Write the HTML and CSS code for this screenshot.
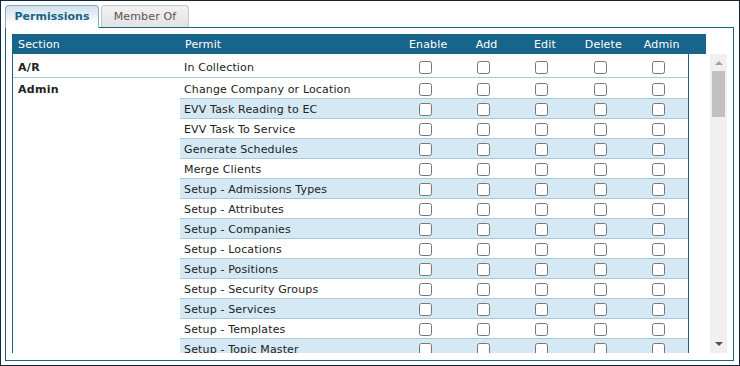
FILE: index.html
```html
<!DOCTYPE html>
<html lang="en">
<head>
    <meta charset="UTF-8">
    <title>Security Group Permissions</title>
    <link rel="stylesheet" href="styles.css">
</head>
<body>
    <div class="window">
        <div class="tabs">
            <div class="tab active">Permissions</div>
            <div class="tab">Member Of</div>
        </div>

        <div class="panel">
            <div class="grid-head">
                <div class="col-section">Section</div>
                <div class="col-permit">Permit</div>
                <div class="col-flag">Enable</div>
                <div class="col-flag">Add</div>
                <div class="col-flag">Edit</div>
                <div class="col-flag">Delete</div>
                <div class="col-flag">Admin</div>
            </div>

            <div class="grid-wrap">
                <div class="grid-body">
                    <div class="section">
                        <div class="section-name">A/R</div>
                        <div class="permits">
                            <div class="permit-row">
                                <div class="permit-name">In Collection</div>
                                <div class="flag"><input type="checkbox"></div>
                                <div class="flag"><input type="checkbox"></div>
                                <div class="flag"><input type="checkbox"></div>
                                <div class="flag"><input type="checkbox"></div>
                                <div class="flag"><input type="checkbox"></div>
                            </div>
                        </div>
                    </div>

                    <div class="section">
                        <div class="section-name">Admin</div>
                        <div class="permits">
                            <div class="permit-row">
                                <div class="permit-name">Change Company or Location</div>
                                <div class="flag"><input type="checkbox"></div>
                                <div class="flag"><input type="checkbox"></div>
                                <div class="flag"><input type="checkbox"></div>
                                <div class="flag"><input type="checkbox"></div>
                                <div class="flag"><input type="checkbox"></div>
                            </div>
                            <div class="permit-row">
                                <div class="permit-name">EVV Task Reading to EC</div>
                                <div class="flag"><input type="checkbox"></div>
                                <div class="flag"><input type="checkbox"></div>
                                <div class="flag"><input type="checkbox"></div>
                                <div class="flag"><input type="checkbox"></div>
                                <div class="flag"><input type="checkbox"></div>
                            </div>
                            <div class="permit-row">
                                <div class="permit-name">EVV Task To Service</div>
                                <div class="flag"><input type="checkbox"></div>
                                <div class="flag"><input type="checkbox"></div>
                                <div class="flag"><input type="checkbox"></div>
                                <div class="flag"><input type="checkbox"></div>
                                <div class="flag"><input type="checkbox"></div>
                            </div>
                            <div class="permit-row">
                                <div class="permit-name">Generate Schedules</div>
                                <div class="flag"><input type="checkbox"></div>
                                <div class="flag"><input type="checkbox"></div>
                                <div class="flag"><input type="checkbox"></div>
                                <div class="flag"><input type="checkbox"></div>
                                <div class="flag"><input type="checkbox"></div>
                            </div>
                            <div class="permit-row">
                                <div class="permit-name">Merge Clients</div>
                                <div class="flag"><input type="checkbox"></div>
                                <div class="flag"><input type="checkbox"></div>
                                <div class="flag"><input type="checkbox"></div>
                                <div class="flag"><input type="checkbox"></div>
                                <div class="flag"><input type="checkbox"></div>
                            </div>
                            <div class="permit-row">
                                <div class="permit-name">Setup - Admissions Types</div>
                                <div class="flag"><input type="checkbox"></div>
                                <div class="flag"><input type="checkbox"></div>
                                <div class="flag"><input type="checkbox"></div>
                                <div class="flag"><input type="checkbox"></div>
                                <div class="flag"><input type="checkbox"></div>
                            </div>
                            <div class="permit-row">
                                <div class="permit-name">Setup - Attributes</div>
                                <div class="flag"><input type="checkbox"></div>
                                <div class="flag"><input type="checkbox"></div>
                                <div class="flag"><input type="checkbox"></div>
                                <div class="flag"><input type="checkbox"></div>
                                <div class="flag"><input type="checkbox"></div>
                            </div>
                            <div class="permit-row">
                                <div class="permit-name">Setup - Companies</div>
                                <div class="flag"><input type="checkbox"></div>
                                <div class="flag"><input type="checkbox"></div>
                                <div class="flag"><input type="checkbox"></div>
                                <div class="flag"><input type="checkbox"></div>
                                <div class="flag"><input type="checkbox"></div>
                            </div>
                            <div class="permit-row">
                                <div class="permit-name">Setup - Locations</div>
                                <div class="flag"><input type="checkbox"></div>
                                <div class="flag"><input type="checkbox"></div>
                                <div class="flag"><input type="checkbox"></div>
                                <div class="flag"><input type="checkbox"></div>
                                <div class="flag"><input type="checkbox"></div>
                            </div>
                            <div class="permit-row">
                                <div class="permit-name">Setup - Positions</div>
                                <div class="flag"><input type="checkbox"></div>
                                <div class="flag"><input type="checkbox"></div>
                                <div class="flag"><input type="checkbox"></div>
                                <div class="flag"><input type="checkbox"></div>
                                <div class="flag"><input type="checkbox"></div>
                            </div>
                            <div class="permit-row">
                                <div class="permit-name">Setup - Security Groups</div>
                                <div class="flag"><input type="checkbox"></div>
                                <div class="flag"><input type="checkbox"></div>
                                <div class="flag"><input type="checkbox"></div>
                                <div class="flag"><input type="checkbox"></div>
                                <div class="flag"><input type="checkbox"></div>
                            </div>
                            <div class="permit-row">
                                <div class="permit-name">Setup - Services</div>
                                <div class="flag"><input type="checkbox"></div>
                                <div class="flag"><input type="checkbox"></div>
                                <div class="flag"><input type="checkbox"></div>
                                <div class="flag"><input type="checkbox"></div>
                                <div class="flag"><input type="checkbox"></div>
                            </div>
                            <div class="permit-row">
                                <div class="permit-name">Setup - Templates</div>
                                <div class="flag"><input type="checkbox"></div>
                                <div class="flag"><input type="checkbox"></div>
                                <div class="flag"><input type="checkbox"></div>
                                <div class="flag"><input type="checkbox"></div>
                                <div class="flag"><input type="checkbox"></div>
                            </div>
                            <div class="permit-row">
                                <div class="permit-name">Setup - Topic Master</div>
                                <div class="flag"><input type="checkbox"></div>
                                <div class="flag"><input type="checkbox"></div>
                                <div class="flag"><input type="checkbox"></div>
                                <div class="flag"><input type="checkbox"></div>
                                <div class="flag"><input type="checkbox"></div>
                            </div>
                        </div>
                    </div>
                </div>

                <div class="scrollbar">
                    <div class="scroll-up"></div>
                    <div class="scroll-thumb"></div>
                    <div class="scroll-space"></div>
                    <div class="scroll-down"></div>
                </div>
            </div>
        </div>
    </div>
</body>
</html>
```

FILE: styles.css
```css
:root {
    --frame-color: #13263d;
    --border-color: #1b6286;
    --header-bg: #17658a;
    --row-alt: #d5e9f4;
    --row-line: #a9c9db;
    --text-color: #222222;
}

* {
    margin: 0;
    padding: 0;
    box-sizing: border-box;
}

body {
    font-family: 'DejaVu Sans', Verdana, sans-serif;
    font-size: 11px;
    letter-spacing: 0.15px;
    color: var(--text-color);
    background-color: #ffffff;
}

.window {
    width: 740px;
    height: 366px;
    border: 1px solid var(--frame-color);
    padding: 4px 5px 4px 4px;
}

/* Tabs */
.tabs {
    display: flex;
    align-items: flex-start;
    gap: 2px;
    height: 23px;
    border-bottom: 1px solid var(--border-color);
}

.tab {
    height: 22px;
    line-height: 21px;
    text-align: center;
    border: 1px solid #c6c6c6;
    border-bottom: none;
    border-radius: 4px 4px 0 0;
    background: linear-gradient(#f2f2f2, #e2e2e2);
    color: #555555;
    width: 88px;
}

.tab.active {
    width: 94px;
    height: 23px;
    margin-bottom: -1px;
    border-color: #86a8c0;
    background: linear-gradient(#cfe1ec, #ffffff 85%);
    color: var(--border-color);
    font-weight: bold;
    letter-spacing: 0;
}

/* Panel */
.panel {
    height: 333px;
    border: 1px solid var(--border-color);
    border-top: none;
    padding: 6px 0 0 6px;
}

.grid-head {
    display: grid;
    grid-template-columns: 168px 216px repeat(5, 58.4px) 1fr;
    width: 694px;
    height: 20px;
    line-height: 21px;
    background-color: var(--header-bg);
    color: #ffffff;
}

.grid-head .col-section {
    padding-left: 6px;
}

.grid-head .col-permit {
    padding-left: 5px;
}

.grid-head .col-flag {
    text-align: center;
    padding-left: 6px;
}

.grid-wrap {
    display: flex;
    align-items: flex-start;
}

.grid-body {
    width: 677px;
    height: 299px;
    padding-top: 2px;
    overflow: hidden;
    border-left: 1px solid var(--border-color);
    border-right: 1px solid var(--border-color);
}

.section {
    display: flex;
    padding-top: 1px;
    border-bottom: 1px solid var(--row-line);
}

.section-name {
    width: 167px;
    padding: 1px 0 0 5px;
    line-height: 19px;
    font-weight: bold;
    letter-spacing: 0.3px;
}

.permits {
    flex: 1;
}

.permit-row {
    display: grid;
    grid-template-columns: 216px repeat(5, 1fr);
    height: 20px;
    border-bottom: 1px solid var(--row-line);
}

.permit-row:nth-child(even) {
    background-color: var(--row-alt);
}

.permit-row:last-child {
    height: 19px;
    border-bottom: none;
}

.permit-name {
    padding: 1px 0 0 4px;
    line-height: 19px;
}

.flag {
    display: flex;
    align-items: center;
    justify-content: center;
}

.flag input {
    margin: 0;
    width: 13px;
    height: 13px;
}

/* Fake scrollbar */
.scrollbar {
    display: flex;
    flex-direction: column;
    align-items: center;
    width: 17px;
    height: 299px;
    margin-left: 21px;
    background-color: #f0f0f0;
}

.scroll-up {
    margin-top: 7px;
    width: 0;
    height: 0;
    border-left: 4px solid transparent;
    border-right: 4px solid transparent;
    border-bottom: 4px solid #a3a3a3;
}

.scroll-thumb {
    margin-top: 6px;
    width: 13px;
    height: 46px;
    background-color: #c1c1c1;
}

.scroll-space {
    flex: 1;
}

.scroll-down {
    margin-bottom: 7px;
    width: 0;
    height: 0;
    border-left: 4px solid transparent;
    border-right: 4px solid transparent;
    border-top: 4px solid #505050;
}
```
